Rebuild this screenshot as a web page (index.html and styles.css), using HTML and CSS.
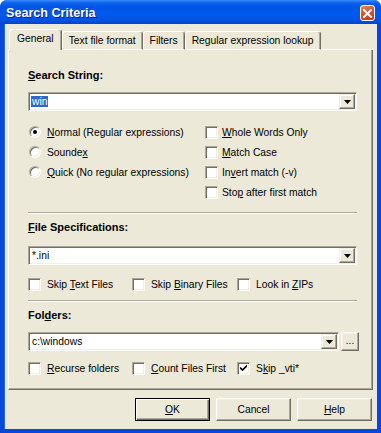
FILE: index.html
```html
<!DOCTYPE html>
<html>
<head>
<meta charset="utf-8">
<title>Search Criteria</title>
<link rel="stylesheet" href="styles.css">
</head>
<body>
<div class="window">
  <div class="titlebar">
    <span class="title">Search Criteria</span>
    <span class="close">
      <svg width="9" height="9" viewBox="0 0 9 9"><path d="M1 1 L8 8 M8 1 L1 8" stroke="#fff" stroke-width="2" stroke-linecap="square"/></svg>
    </span>
  </div>
  <div class="client">
    <div class="tabstrip">
      <div class="tab-lead"></div>
      <div class="tab selected">General</div>
      <div class="tab">Text file format</div>
      <div class="tab">Filters</div>
      <div class="tab">Regular expression lookup</div>
      <div class="tab-fill"></div>
    </div>
    <div class="panel">
      <div class="label l-first"><u>S</u>earch String:</div>
      <div class="combo c-first">
        <div class="combo-text"><span class="sel">win</span></div>
        <div class="arrow"><svg width="7" height="4" viewBox="0 0 7 4"><path d="M0 0 H7 L3.5 4 Z" fill="#000"/></svg></div>
      </div>
      <div class="opts">
        <div class="opt-col left">
          <div class="opt"><span class="radio on"></span><span><u>N</u>ormal (Regular expressions)</span></div>
          <div class="opt"><span class="radio"></span><span>Sounde<u>x</u></span></div>
          <div class="opt"><span class="radio"></span><span><u>Q</u>uick (No regular expressions)</span></div>
        </div>
        <div class="opt-col">
          <div class="opt"><span class="check"></span><span><u>W</u>hole Words Only</span></div>
          <div class="opt"><span class="check"></span><span><u>M</u>atch Case</span></div>
          <div class="opt"><span class="check"></span><span>In<u>v</u>ert match (-v)</span></div>
          <div class="opt"><span class="check"></span><span>Sto<u>p</u> after first match</span></div>
        </div>
      </div>
      <div class="sep s-first"></div>
      <div class="label l-second"><u>F</u>ile Specifications:</div>
      <div class="combo c-second">
        <div class="combo-text">*.ini</div>
        <div class="arrow"><svg width="7" height="4" viewBox="0 0 7 4"><path d="M0 0 H7 L3.5 4 Z" fill="#000"/></svg></div>
      </div>
      <div class="checkrow r-first">
        <div class="citem"><span class="check"></span><span>Skip <u>T</u>ext Files</span></div>
        <div class="citem"><span class="check"></span><span>Skip <u>B</u>inary Files</span></div>
        <div class="citem"><span class="check"></span><span>Look in <u>Z</u>IPs</span></div>
      </div>
      <div class="sep s-second"></div>
      <div class="label l-third">Fol<u>d</u>ers:</div>
      <div class="folder-row">
        <div class="combo c-third">
          <div class="combo-text">c:\windows</div>
          <div class="arrow"><svg width="7" height="4" viewBox="0 0 7 4"><path d="M0 0 H7 L3.5 4 Z" fill="#000"/></svg></div>
        </div>
        <div class="browse">...</div>
      </div>
      <div class="checkrow r-second">
        <div class="citem"><span class="check"></span><span><u>R</u>ecurse folders</span></div>
        <div class="citem"><span class="check"></span><span><u>C</u>ount Files First</span></div>
        <div class="citem"><span class="check checked"><svg width="7" height="7" viewBox="0 0 7 7"><path d="M0 2.5 L2.5 5 L7 0.5" fill="none" stroke="#000" stroke-width="1.6"/></svg></span><span>S<u>k</u>ip _vti*</span></div>
      </div>
    </div>
    <div class="buttons">
      <div class="btn default"><span><u>O</u>K</span></div>
      <div class="btn"><span>Cancel</span></div>
      <div class="btn"><span><u>H</u>elp</span></div>
    </div>
  </div>
</div>
</body>
</html>
```
FILE: styles.css
```css
* { box-sizing: border-box; margin: 0; padding: 0; }
html, body { width: 381px; height: 433px; overflow: hidden; background: #ffffff; }
body { font-family: "Liberation Sans", Arial, sans-serif; font-size: 10.3px; color: #000; }
u { text-decoration: underline; text-underline-offset: 1px; }

.window {
  width: 381px; height: 433px;
  display: flex; flex-direction: column;
  background: #0A46DB;
  border-radius: 7px 7px 0 0;
}
.titlebar {
  height: 24px; flex: none;
  display: flex; align-items: center; justify-content: space-between;
  padding: 0 6px 0 6px;
  border-radius: 7px 7px 0 0;
  background: linear-gradient(180deg, #3A8CFF 0, #0B61EA 3px, #0055E5 7px, #0059EC 14px, #0353E2 20px, #0044CC 24px);
}
.title {
  color: #fff; font-weight: bold; font-size: 12.6px;
  text-shadow: 1px 1px #0A1E8A;
  padding-top: 1px;
}
.close {
  width: 15px; height: 16px;
  margin-top: 2px;
  display: flex; align-items: center; justify-content: center;
  border: 1px solid #fff; border-radius: 3px;
  background: linear-gradient(160deg, #E8866A 0, #D8502F 45%, #C23A1C 100%);
}

.client {
  flex: 1;
  background: #ECE9D8;
  border: 4px solid #0A46DB; border-top: 0;
  box-shadow: inset 1px 0 #1D68EE;
  padding: 5px 4px 0 4px;
  display: flex; flex-direction: column;
}

.tabstrip { display: flex; align-items: flex-end; height: 21px; flex: none; }
.tab-lead { width: 1px; height: 1px; background: #fff; }
.tab-fill { flex: 1; height: 1px; background: #fff; }
.tab {
  height: 19px; padding: 0 6px; line-height: 17px; white-space: nowrap;
  border: 1px solid #fff; border-right-color: #716F64;
  border-radius: 3px 3px 0 0;
  box-shadow: inset -1px 0 #ACA899;
}
.tab.selected {
  height: 21px; padding: 0 7px; line-height: 18px;
  border-bottom: 0;
}

.panel {
  height: 340px; flex: none;
  border-left: 1px solid #fff;
  border-right: 1px solid #716F64;
  border-bottom: 1px solid #716F64;
  box-shadow: inset -1px -1px #ACA899;
  padding: 0 15px 0 19px;
  display: flex; flex-direction: column;
}

.label { font-weight: bold; font-size: 11px; line-height: 13px; height: 13px; }
.l-first { margin-top: 19px; }
.l-second { margin-top: 7px; }
.l-third { margin-top: 7px; }

.combo {
  display: flex; align-items: center;
  height: 19px;
  background: #fff;
  border: 1px solid; border-color: #ACA899 #fff #fff #ACA899;
  box-shadow: inset 1px 1px #716F64, inset -1px -1px #F1EFE2;
  padding: 1px 1px 1px 2px;
}
.c-first { margin-top: 10px; }
.c-second { margin-top: 12px; }
.combo-text { flex: 1; line-height: 13px; padding-left: 1px; white-space: nowrap; }
.sel { background: #316AC5; color: #fff; padding: 0 1px; margin-left: -1px; }
.arrow {
  width: 16px; height: 15px; flex: none;
  background: #ECE9D8;
  border: 1px solid; border-color: #F1EFE2 #716F64 #716F64 #F1EFE2;
  box-shadow: inset -1px -1px #ACA899, inset 1px 1px #fff;
  display: flex; align-items: center; justify-content: center;
}

.opts { display: flex; margin-top: 11px; }
.opt-col.left { width: 177px; }
.opt { height: 20px; display: flex; align-items: center; white-space: nowrap; }

.radio {
  width: 12px; height: 12px; flex: none;
  margin: 0 6px 0 1px;
  border-radius: 50%;
  background: #fff;
  border: 1px solid; border-color: #ACA899 #fff #fff #ACA899;
  box-shadow: inset 1px 1px #716F64, inset -1px -1px #F1EFE2;
  display: flex; align-items: center; justify-content: center;
}
.radio.on::after { content: ""; width: 4px; height: 4px; border-radius: 50%; background: #000; }

.check {
  width: 13px; height: 13px; flex: none;
  margin-right: 4px;
  background: #fff;
  border: 1px solid; border-color: #ACA899 #fff #fff #ACA899;
  box-shadow: inset 1px 1px #716F64, inset -1px -1px #F1EFE2;
  display: flex; align-items: center; justify-content: center;
}

.sep { height: 2px; border-top: 1px solid #ACA899; border-bottom: 1px solid #fff; flex: none; }
.s-first { margin-top: 10px; }
.s-second { margin-top: 6px; }

.checkrow { display: grid; grid-template-columns: 104px 105px auto; height: 20px; align-items: center; }
.r-first { margin-top: 9px; }
.r-second { margin-top: 7px; }
.citem { display: flex; align-items: center; white-space: nowrap; }
.citem .check { margin-right: 6px; }

.folder-row { display: flex; gap: 2px; margin-top: 10px; margin-right: -2px; }
.c-third { flex: 1; }
.browse {
  width: 18px; height: 19px; flex: none;
  background: #ECE9D8;
  border: 1px solid; border-color: #fff #716F64 #716F64 #fff;
  box-shadow: inset -1px -1px #ACA899, inset 1px 1px #F1EFE2;
  text-align: center; line-height: 15px; font-size: 10px;
}

.buttons { display: flex; justify-content: flex-end; gap: 6px; margin-top: 8px; padding-right: 1px; }
.btn {
  width: 75px; height: 23px;
  display: flex; align-items: center; justify-content: center;
  background: #ECE9D8;
  border: 1px solid; border-color: #fff #716F64 #716F64 #fff;
  box-shadow: inset -1px -1px #ACA899, inset 1px 1px #F1EFE2;
}
.btn.default {
  border: 1px solid #000;
  box-shadow: inset 1px 1px #fff, inset -1px -1px #716F64, inset -2px -2px #ACA899;
}
```
